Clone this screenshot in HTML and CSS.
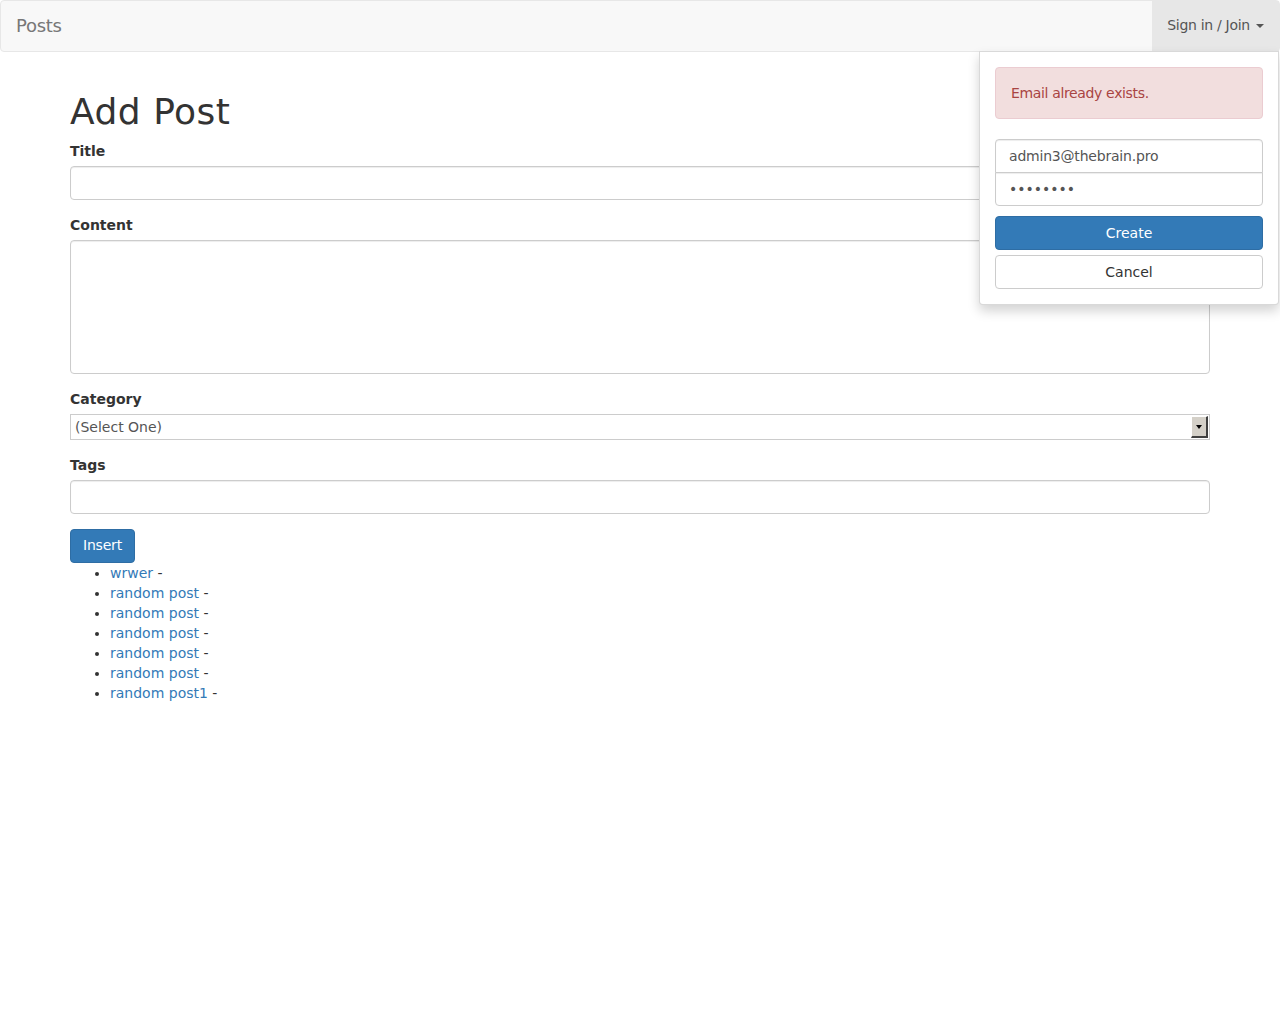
FILE: index.html
```html
<!DOCTYPE html>
<html>
<head>
<meta charset="utf-8">
<link rel="stylesheet" href="styles.css">
</head>
<body>
<nav class="navbar">
  <a class="brand" href="#">Posts</a>
  <div class="nav-right">
    <a class="dropdown-toggle" href="#">Sign in / Join <span class="caret"></span></a>
    <div class="dropdown-menu">
      <div class="alert">Email already exists.</div>
      <div class="input-group">
        <input class="ig-top" type="text" value="admin3@thebrain.pro">
        <input class="ig-bottom" type="password" value="12345678">
      </div>
      <button class="btn btn-primary btn-block">Create</button>
      <button class="btn btn-default btn-block">Cancel</button>
    </div>
  </div>
</nav>
<main class="container">
  <h1>Add Post</h1>
  <form class="form">
    <div class="form-group">
      <label>Title</label>
      <input class="form-control" type="text">
    </div>
    <div class="form-group">
      <label>Content</label>
      <textarea class="form-control textarea"></textarea>
    </div>
    <div class="form-group">
      <label>Category</label>
      <div class="select">
        <span class="select-text">(Select One)</span>
        <span class="select-arrow"><span class="arrow-tri"></span></span>
      </div>
    </div>
    <div class="form-group">
      <label>Tags</label>
      <input class="form-control" type="text">
    </div>
    <button type="button" class="btn btn-primary btn-insert">Insert</button>
  </form>
  <ul class="posts">
    <li><a href="#">wrwer</a> -</li>
    <li><a href="#">random post</a> -</li>
    <li><a href="#">random post</a> -</li>
    <li><a href="#">random post</a> -</li>
    <li><a href="#">random post</a> -</li>
    <li><a href="#">random post</a> -</li>
    <li><a href="#">random post1</a> -</li>
  </ul>
</main>
</body>
</html>
```
FILE: styles.css
```css
* { box-sizing: border-box; }
html, body { margin: 0; padding: 0; }
body {
  font-family: "DejaVu Sans", sans-serif;
  font-weight: 400;
  font-size: 14px;
  line-height: 20px;
  color: #333;
  background: #fff;
}
a { color: #337ab7; text-decoration: none; }

.navbar {
  height: 52px;
  background: #f8f8f8;
  border: 1px solid #e7e7e7;
  border-radius: 4px;
  display: flex;
  justify-content: space-between;
  align-items: stretch;
  position: relative;
}
.brand {
  color: #777;
  font-size: 18px;
  line-height: 20px;
  letter-spacing: -0.3px;
  padding: 15px 15px;
  height: 50px;
}
.nav-right { position: relative; }
.dropdown-toggle {
  display: block;
  height: 50px;
  padding: 14px 15px 16px;
  color: #555;
  background: #e7e7e7;
  white-space: nowrap;
  letter-spacing: -0.3px;
}
.caret {
  display: inline-block;
  width: 0; height: 0;
  margin-left: 2px;
  vertical-align: middle;
  border-top: 4px solid #555;
  border-left: 4px solid transparent;
  border-right: 4px solid transparent;
}
.dropdown-menu {
  position: absolute;
  top: 50px;
  right: 0;
  width: 300px;
  background: #fff;
  border: 1px solid rgba(0,0,0,.15);
  border-radius: 0 0 4px 4px;
  box-shadow: 0 6px 12px rgba(0,0,0,.175);
  padding: 15px;
  z-index: 10;
}
.alert {
  background: #f2dede;
  border: 1px solid #ebccd1;
  color: #a94442;
  border-radius: 4px;
  padding: 15px;
  height: 52px;
  margin-bottom: 20px;
  letter-spacing: -0.35px;
}
.input-group { display: flex; flex-direction: column; margin-bottom: 10px; }
.input-group input {
  height: 34px;
  border: 1px solid #ccc;
  padding: 6px 12px 6px 13px;
  font: inherit;
  color: #555;
  box-shadow: inset 0 1px 1px rgba(0,0,0,.075);
}
.ig-top { border-radius: 4px 4px 0 0; letter-spacing: -0.2px; }
.ig-bottom { border-radius: 0 0 4px 4px; margin-top: -1px; }

.btn {
  display: block;
  font: inherit;
  height: 34px;
  padding: 6px 12px;
  border: 1px solid transparent;
  border-radius: 4px;
  text-align: center;
  cursor: pointer;
}
.btn-block { width: 100%; }
.btn-primary { background: #337ab7; border-color: #2e6da4; color: #fff; }
.btn-default { background: #fff; border-color: #ccc; color: #333; margin-top: 5px; }

.container {
  width: 1170px;
  margin: 0 auto;
  padding: 0 15px;
}
h1 {
  font-size: 36px;
  font-weight: 400;
  line-height: 39px;
  letter-spacing: 0.5px;
  margin: 40px 0 10px;
}
.form-group { margin-bottom: 15px; }
label {
  display: block;
  font-weight: bold;
  margin-bottom: 5px;
  max-width: 100%;
}
.form-control {
  display: block;
  width: 100%;
  height: 34px;
  padding: 6px 12px;
  font: inherit;
  color: #555;
  background: #fff;
  border: 1px solid #ccc;
  border-radius: 4px;
  box-shadow: inset 0 1px 1px rgba(0,0,0,.075);
}
.textarea { height: 134px; resize: none; }
.select {
  height: 26px;
  border: 1px solid #ccc;
  display: flex;
  align-items: center;
  justify-content: space-between;
  color: #555;
  padding-left: 4px;
  padding-right: 1px;
}
.select-arrow {
  width: 17px;
  height: 22px;
  background: #d4d0c8;
  border-top: 1px solid #fff;
  border-left: 1px solid #fff;
  border-right: 2px solid #404040;
  border-bottom: 2px solid #404040;
  display: flex;
  align-items: center;
  justify-content: center;
}
.arrow-tri {
  width: 0; height: 0;
  border-top: 4px solid #000;
  border-left: 3.5px solid transparent;
  border-right: 3.5px solid transparent;
}
.btn-insert {
  width: 65px;
  padding: 5px 0 7px;
  letter-spacing: -0.2px;
}
.posts { margin: 0 0 10px; padding-left: 40px; }
```
